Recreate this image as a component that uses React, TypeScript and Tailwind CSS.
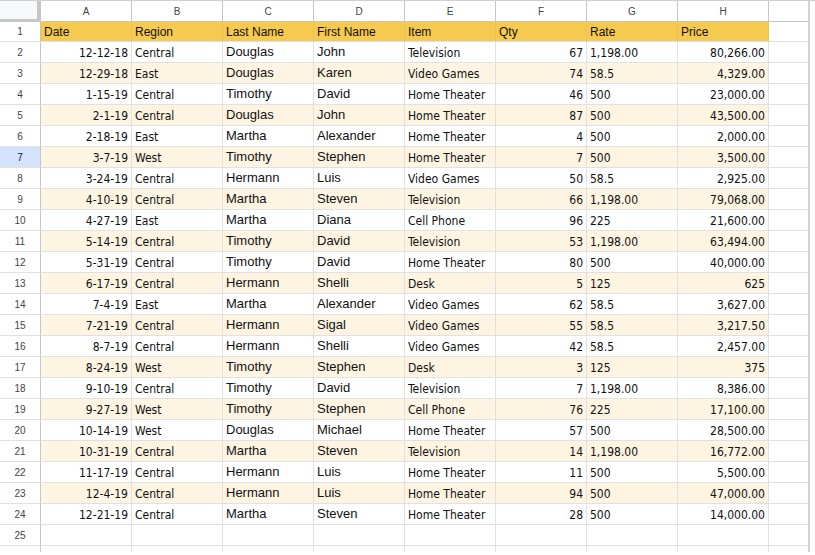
import React from "react";

type Row = [string, string, string, string, string, string, string, string];

const data: Row[] = [
  ["12-12-18", "Central", "Douglas", "John", "Television", "67", "1,198.00", "80,266.00"],
  ["12-29-18", "East", "Douglas", "Karen", "Video Games", "74", "58.5", "4,329.00"],
  ["1-15-19", "Central", "Timothy", "David", "Home Theater", "46", "500", "23,000.00"],
  ["2-1-19", "Central", "Douglas", "John", "Home Theater", "87", "500", "43,500.00"],
  ["2-18-19", "East", "Martha", "Alexander", "Home Theater", "4", "500", "2,000.00"],
  ["3-7-19", "West", "Timothy", "Stephen", "Home Theater", "7", "500", "3,500.00"],
  ["3-24-19", "Central", "Hermann", "Luis", "Video Games", "50", "58.5", "2,925.00"],
  ["4-10-19", "Central", "Martha", "Steven", "Television", "66", "1,198.00", "79,068.00"],
  ["4-27-19", "East", "Martha", "Diana", "Cell Phone", "96", "225", "21,600.00"],
  ["5-14-19", "Central", "Timothy", "David", "Television", "53", "1,198.00", "63,494.00"],
  ["5-31-19", "Central", "Timothy", "David", "Home Theater", "80", "500", "40,000.00"],
  ["6-17-19", "Central", "Hermann", "Shelli", "Desk", "5", "125", "625"],
  ["7-4-19", "East", "Martha", "Alexander", "Video Games", "62", "58.5", "3,627.00"],
  ["7-21-19", "Central", "Hermann", "Sigal", "Video Games", "55", "58.5", "3,217.50"],
  ["8-7-19", "Central", "Hermann", "Shelli", "Video Games", "42", "58.5", "2,457.00"],
  ["8-24-19", "West", "Timothy", "Stephen", "Desk", "3", "125", "375"],
  ["9-10-19", "Central", "Timothy", "David", "Television", "7", "1,198.00", "8,386.00"],
  ["9-27-19", "West", "Timothy", "Stephen", "Cell Phone", "76", "225", "17,100.00"],
  ["10-14-19", "West", "Douglas", "Michael", "Home Theater", "57", "500", "28,500.00"],
  ["10-31-19", "Central", "Martha", "Steven", "Television", "14", "1,198.00", "16,772.00"],
  ["11-17-19", "Central", "Hermann", "Luis", "Home Theater", "11", "500", "5,500.00"],
  ["12-4-19", "Central", "Hermann", "Luis", "Home Theater", "94", "500", "47,000.00"],
  ["12-21-19", "Central", "Martha", "Steven", "Home Theater", "28", "500", "14,000.00"],
];

const letters = ["A", "B", "C", "D", "E", "F", "G", "H"];
const headers = ["Date", "Region", "Last Name", "First Name", "Item", "Qty", "Rate", "Price"];

const tahoma =
  "font-['DejaVu_Sans_Condensed','DejaVu_Sans',sans-serif] font-stretch-condensed text-[12px] text-[#111]";
const arial = "font-['Liberation_Sans',Arial,sans-serif] text-[#111]";

function RowHeader({ n, selected, h }: { n: number; selected?: boolean; h: string }) {
  return (
    <div
      className={`w-[41px] shrink-0 ${h} border-r border-r-[#c4c7c5] border-b border-b-[#e1e1e1] flex items-center justify-center font-['Liberation_Sans',Arial,sans-serif] text-[10px] ${
        selected ? "bg-[#d3e3fd] text-[#041e49]" : "bg-white text-[#444]"
      }`}
    >
      {n}
    </div>
  );
}

export default function App() {
  return (
    <div className="w-[815px] h-[555px] bg-white overflow-hidden">
      <div className="h-[552px] overflow-hidden border-t border-t-[#d0d0d0]">
        {/* column header row */}
        <div className="flex h-[21px]">
          <div className="w-[41px] shrink-0 h-[21px] bg-[#f8f9fa] border-r-[4px] border-r-[#c4c7c5] border-b-[3px] border-b-[#c4c7c5]" />
          {letters.map((l) => (
            <div
              key={l}
              className="w-[91px] shrink-0 h-[21px] border-r border-r-[#c4c7c5] border-b border-b-[#c4c7c5] flex items-center justify-center font-['Liberation_Sans',Arial,sans-serif] text-[10px] text-[#444]"
            >
              {l}
            </div>
          ))}
          <div className="w-[41px] shrink-0 h-[21px] border-r-2 border-r-[#d4d4d4] border-b border-b-[#c4c7c5]" />
        </div>

        {/* header data row */}
        <div className="flex h-[20px]">
          <RowHeader n={1} h="h-[20px]" />
          {headers.map((t) => (
            <div
              key={t}
              className={`w-[91px] shrink-0 h-[20px] bg-[#f6c94f] border-r border-r-[#e8c35a] border-b border-b-[#e1e1e1] flex items-end px-[3px] pb-[1px] ${arial} text-[12px] leading-[16px]`}
            >
              {t}
            </div>
          ))}
          <div className="w-[41px] shrink-0 h-[20px] border-r-2 border-r-[#d4d4d4] border-b border-b-[#e1e1e1]" />
        </div>

        {data.map((r, i) => {
          const n = i + 2;
          const cream = n % 2 === 1;
          const bg = cream ? "bg-[#fdf5e1]" : "bg-white";
          const cell = `w-[91px] shrink-0 h-[21px] ${bg} border-r border-r-[#e1e1e1] border-b border-b-[#e1e1e1] flex items-end px-[3px] whitespace-nowrap overflow-hidden`;
          return (
            <div key={n} className="flex h-[21px]">
              <RowHeader n={n} selected={n === 7} h="h-[21px]" />
              <div className={`${cell} justify-end ${tahoma} leading-[16px] pb-[1px]`}>{r[0]}</div>
              <div className={`${cell} ${tahoma} leading-[16px] pb-[1px]`}>{r[1]}</div>
              <div className={`${cell} ${arial} text-[13px] leading-[16px] pb-[2px]`}>{r[2]}</div>
              <div className={`${cell} ${arial} text-[13px] leading-[16px] pb-[2px]`}>{r[3]}</div>
              <div className={`${cell} ${tahoma} leading-[16px] pb-[1px]`}>{r[4]}</div>
              <div className={`${cell} justify-end ${tahoma} leading-[16px] pb-[1px]`}>{r[5]}</div>
              <div className={`${cell} ${tahoma} leading-[16px] pb-[1px]`}>{r[6]}</div>
              <div className={`${cell} justify-end ${tahoma} leading-[16px] pb-[1px]`}>{r[7]}</div>
              <div className="w-[41px] shrink-0 h-[21px] border-r-2 border-r-[#d4d4d4] border-b border-b-[#e1e1e1]" />
            </div>
          );
        })}

        {[25, 26].map((n) => (
          <div key={n} className="flex h-[21px]">
            <RowHeader n={n} h="h-[21px]" />
            {letters.map((l) => (
              <div
                key={l}
                className="w-[91px] shrink-0 h-[21px] border-r border-r-[#e1e1e1] border-b border-b-[#e1e1e1]"
              />
            ))}
            <div className="w-[41px] shrink-0 h-[21px] border-r-2 border-r-[#d4d4d4] border-b border-b-[#e1e1e1]" />
          </div>
        ))}
      </div>
    </div>
  );
}
